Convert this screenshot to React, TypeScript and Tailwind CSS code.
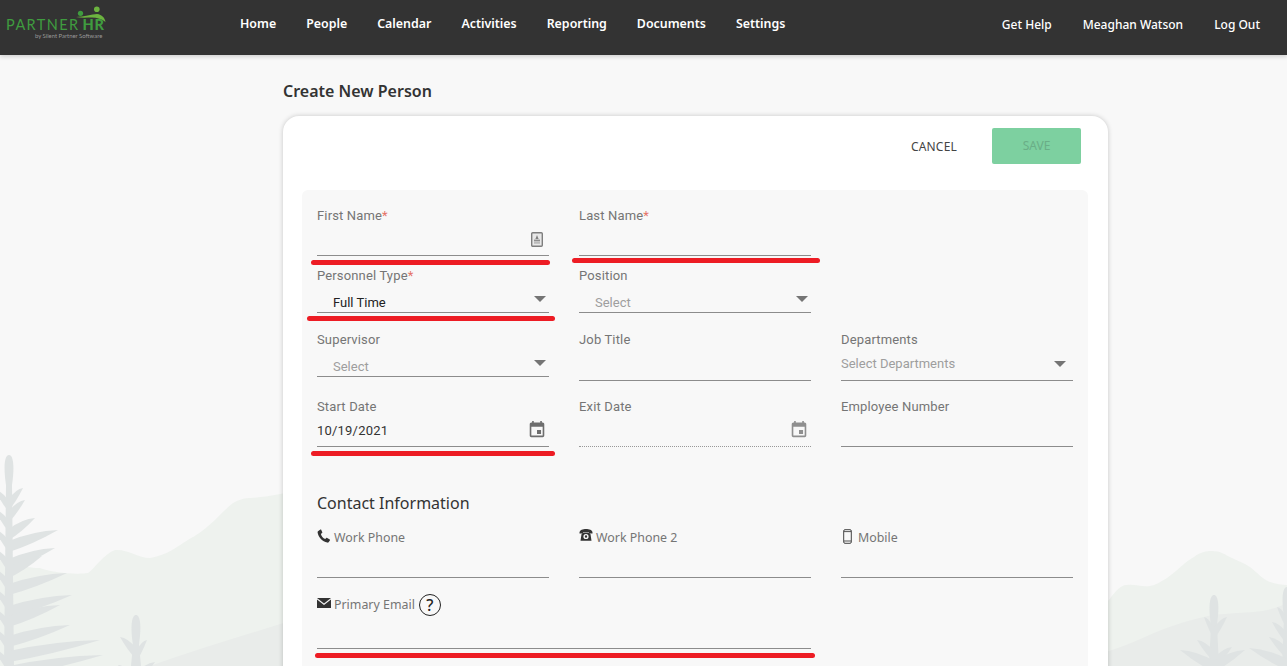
import type { ReactNode } from 'react';

const navLinks = ['Home', 'People', 'Calendar', 'Activities', 'Reporting', 'Documents', 'Settings'];
const userLinks = ['Get Help', 'Meaghan Watson', 'Log Out'];

function Tree({ trunk, top, bottom, tips, fill = '#dfe3e3' }: { trunk: number; top: number; bottom: number; tips: [number, number][]; fill?: string }) {
  return (
    <g fill={fill}>
      <path d={`M${trunk - 5} ${bottom} L${trunk - 3} ${top + 30} C${trunk - 6} ${top + 10} ${trunk - 4} ${top} ${trunk} ${top} C${trunk + 4} ${top} ${trunk + 6} ${top + 10} ${trunk + 3} ${top + 30} L${trunk + 5} ${bottom} Z`} />
      {tips.map(([tx, ty]) => {
        const by = ty + 18;
        const mx = (trunk + tx) / 2;
        return (
          <path
            key={`${tx}-${ty}`}
            d={`M${trunk} ${by - 7} Q${mx} ${ty + 1} ${tx} ${ty} Q${mx} ${ty + 14} ${trunk} ${by + 4} Z`}
          />
        );
      })}
    </g>
  );
}

function Scenery() {
  return (
    <svg className="absolute inset-0 w-full h-full" viewBox="0 0 1287 666">
      <path fill="#eef2ee" d="M0 560 C15 566 30 568 40 568 C50 572 75 575 88 573 C95 568 105 553 115 550 C128 549 138 558 150 558 C160 556 170 552 177 547 C190 538 198 535 207 527 C218 518 225 509 233 503 C240 499 246 498 250 498 C265 497 275 495 290 492 L290 666 L0 666 Z" />
      <path fill="#e9ecea" d="M150 666 C195 650 245 635 290 621 L290 666 Z" />
      <path fill="#eef2ee" d="M1100 607 L1109 600 C1115 592 1120 585 1127 585 C1135 584 1142 587 1150 586 C1156 585 1160 582 1167 578 C1178 570 1186 561 1194 557 C1200 552 1206 551 1212 551 C1220 551 1224 554 1230 557 C1238 561 1244 563 1250 567 C1258 573 1262 579 1270 582 C1276 584 1282 585 1287 585 L1287 666 L1100 666 Z" />
      <path fill="#e9ecea" d="M1100 654 L1109 651 C1125 646 1140 639 1154 633 C1170 626 1190 620 1204 617 C1215 614 1225 614 1237 613 C1250 612 1258 612 1267 610 C1275 608 1281 606 1287 603 L1287 666 L1100 666 Z" />
      <Tree
        trunk={9}
        top={455}
        bottom={666}
        tips={[[23, 488], [25, 500], [35, 518], [58, 530], [55, 548], [42, 556], [67, 573], [72, 595], [60, 605], [70, 625], [100, 640], [103, 655], [-5, 490], [-5, 510], [-5, 530], [-5, 550], [-5, 570], [-5, 590], [-5, 610], [-5, 630], [-5, 650]]}
      />
      <Tree trunk={136} top={615} bottom={666} tips={[[147, 640], [120, 637], [155, 662], [118, 665]]} />
      <Tree trunk={1214} top={595} bottom={666} tips={[[1227, 617], [1232, 647], [1245, 650], [1204, 617], [1197, 640], [1180, 650], [1235, 670], [1190, 670]]} />
      <Tree trunk={1287} top={587} bottom={666} tips={[[1277, 607], [1272, 622], [1269, 637], [1249, 648], [1262, 668]]} />
    </svg>
  );
}

function Logo() {
  return (
    <div className="relative w-[110px] h-[40px] shrink-0 font-['Lato',sans-serif]">
      <svg className="absolute left-0 top-0" width="110" height="26" viewBox="0 0 110 26">
        <circle cx="80.5" cy="13.3" r="2.6" fill="#3f9c3f" />
        <circle cx="96.8" cy="9.3" r="2.8" fill="#6cb33f" />
        <path fill="#6cb33f" d="M76 17 C84 16.5 92 14.5 97 14 C102 14.5 105 18 105.5 22 C102 19 97 17.5 92 17.5 C87 17.5 81 18 76 17 Z" />
      </svg>
      <div className="absolute left-[6px] top-[15px] flex items-baseline whitespace-nowrap text-[#3f9c3f] text-[14.5px] leading-[19px] tracking-[1.4px]">
        <span className="font-normal">PARTNER</span>
        <span className="ml-[3px] font-black tracking-[0.8px]">HR</span>
      </div>
      <div className="absolute left-[35px] top-[32px] whitespace-nowrap text-[#999] text-[5.9px] leading-[7px]">by Silent Partner Software</div>
    </div>
  );
}

function RedMark({ left, right, offset }: { left: number; right: number; offset: number }) {
  return (
    <div
      className="absolute h-[5px] rounded-full bg-[#ed1c24]"
      style={{ left, right, bottom: offset }}
    />
  );
}

type FieldProps = {
  label: ReactNode;
  required?: boolean;
  height: number;
  dotted?: boolean;
  colClass?: string;
  children?: ReactNode;
};

function Field({ label, required, height, dotted, colClass, children }: FieldProps) {
  return (
    <div className={`relative flex flex-col ${colClass ?? ''}`} style={{ height }}>
      <div className="flex items-center h-[20px] text-[13px] leading-[18px] text-[#757575] font-['Roboto',sans-serif] tracking-[0.15px]">
        {label}
        {required && <span className="text-[#e57368]">*</span>}
      </div>
      <div className={`flex-1 relative flex items-end border-b ${dotted ? 'border-dotted border-[#999]' : 'border-[#8c8c8c]'}`}>
        {children}
      </div>
    </div>
  );
}

function Caret({ className }: { className: string }) {
  return <div className={`absolute w-0 h-0 border-x-[6px] border-x-transparent border-t-[6px] border-t-[#757575] ${className}`} />;
}

function CalendarIcon({ color }: { color: string }) {
  return (
    <svg className="absolute right-[4px] top-[4px]" width="16" height="17" viewBox="3 1 18 21" fill={color}>
      <path d="M17 12h-5v5h5v-5zM16 1v2H8V1H6v2H5c-1.11 0-2 .9-2 2v14c0 1.1.89 2 2 2h14c1.1 0 2-.9 2-2V5c0-1.1-.9-2-2-2h-1V1h-2zm3 18H5V8h14v11z" />
    </svg>
  );
}

function ContactCardIcon() {
  return (
    <svg className="absolute right-[6px] top-[6px]" width="12" height="15" viewBox="0 0 12 15">
      <rect x="0.7" y="0.7" width="10.6" height="13.6" rx="1" fill="#e8e8e8" stroke="#7e7e7e" strokeWidth="1.4" />
      <path d="M6 3 L7.6 7 H4.4 Z" fill="#808080" />
      <rect x="3" y="7.6" width="6" height="1.8" fill="#8e8e8e" />
      <rect x="3" y="10.2" width="6" height="1.4" fill="#b0b0b0" />
    </svg>
  );
}

function PhoneIcon() {
  return (
    <svg className="mr-[3px] mt-[-5px]" width="14" height="14" viewBox="0 0 14 14" fill="#333">
      <path d="M1 2.2 L3.4 0.6 C3.8 0.4 4.1 0.5 4.3 0.9 L5.3 3.2 C5.4 3.6 5.3 3.9 5 4.1 L3.9 4.9 C4.3 7 6 9.2 8.2 10 L9.3 9 C9.6 8.7 9.9 8.7 10.2 8.9 L12.8 10.4 C13.1 10.6 13.2 11 13 11.3 L11.6 13.2 C11.3 13.6 10.8 13.7 10.3 13.6 C5.4 12.7 1.4 8.2 0.6 3.5 C0.5 3 0.7 2.5 1 2.2 Z" />
    </svg>
  );
}

function DeskPhoneIcon() {
  return (
    <svg className="mr-[3px] mt-[-6px]" width="14" height="12" viewBox="0 0 14 12" fill="#333">
      <path fillRule="evenodd" d="M0.5 3.6 C0.5 1 4 0 7 0 C10 0 13.5 1 13.5 3.6 V4.6 H10 V3 H4 V4.6 H0.5 Z" />
      <path fillRule="evenodd" d="M2.5 5.2 L4.3 3.6 H9.7 L11.5 5.2 L12.5 11.8 H1.5 Z M7 4.9 A2.6 2.6 0 1 0 7 10.1 A2.6 2.6 0 1 0 7 4.9 Z M7 6.3 A1.2 1.2 0 1 1 7 8.7 A1.2 1.2 0 1 1 7 6.3 Z" />
    </svg>
  );
}

function MobileIcon() {
  return (
    <svg className="ml-[2px] mr-[6px] mt-[-4px]" width="9" height="15" viewBox="0 0 9 15" fill="none" stroke="#444">
      <rect x="0.7" y="0.7" width="7.6" height="13.6" rx="1.3" strokeWidth="1" />
      <path d="M1 2.6 H8 M1 12 H8" strokeWidth="0.9" />
    </svg>
  );
}

function MailIcon() {
  return (
    <svg className="mr-[3px] mt-[-5px]" width="14" height="10" viewBox="0 0 14 10" fill="#333">
      <path d="M0 0 H14 L7 5.4 Z" />
      <path d="M0 1.6 L7 7 L14 1.6 V10 H0 Z" />
    </svg>
  );
}

export default function App() {
  return (
    <div className="relative w-full h-[666px] overflow-hidden bg-[#f8f8f8] font-['Noto_Sans',sans-serif]">
      <Scenery />

      <header className="relative h-[55px] bg-[#333333] flex items-start shadow-[0_2px_4px_rgba(0,0,0,0.15)]">
        <Logo />
        <nav className="flex gap-[30px] ml-[130px] pt-[15px] text-[12.4px] leading-[18px] font-semibold text-white">
          {navLinks.map((link) => (
            <span key={link}>{link}</span>
          ))}
        </nav>
        <div className="flex gap-[31px] ml-auto pr-[27px] pt-[16px] text-[12px] leading-[18px] font-medium text-white">
          {userLinks.map((link) => (
            <span key={link}>{link}</span>
          ))}
        </div>
      </header>

      <main className="relative w-[825px] ml-[283px]">
        <h1 className="mt-[25px] h-[22px] text-[16px] leading-[22px] font-semibold text-[#333]">Create New Person</h1>

        <section className="mt-[14px] bg-white rounded-t-[16px] shadow-[0_0_5px_rgba(0,0,0,0.2)] pl-[19px] pr-[20px] pt-[12px] pb-[40px]">
          <div className="flex justify-end items-center h-[36px] gap-[35px] pr-[7px]">
            <button className="mt-[1px] text-[12px] text-[#444] tracking-[0.2px]">CANCEL</button>
            <button className="w-[89px] h-[36px] rounded-[2px] bg-[#7dd0a0] text-[12px] text-[#6aae87]">SAVE</button>
          </div>

          <div className="mt-[26px] bg-[#f8f8f8] rounded-[6px] px-[15px] pt-[16px] pb-[30px]">
            <div className="grid grid-cols-[232px_232px_232px] gap-x-[30px] items-start">
              <Field label="First Name" required height={50}>
                <ContactCardIcon />
                <RedMark left={-6} right={-1} offset={-10} />
              </Field>
              <Field label="Last Name" required height={50}>
                <RedMark left={-7} right={-9} offset={-8} />
              </Field>
              <div />
            </div>

            <div className="grid grid-cols-[232px_232px_232px] gap-x-[30px] items-start mt-[10px]">
              <Field label="Personnel Type" required height={47}>
                <span className="pl-[16px] text-[13px] leading-[18px] text-[#222] font-['Roboto',sans-serif]">Full Time</span>
                <Caret className="right-[3px] top-[10px]" />
                <RedMark left={-10} right={-6} offset={-9} />
              </Field>
              <Field label="Position" height={47}>
                <span className="pl-[16px] text-[13px] leading-[18px] text-[#9e9e9e] font-['Roboto',sans-serif]">Select</span>
                <Caret className="right-[3px] top-[10px]" />
              </Field>
              <div />
            </div>

            <div className="grid grid-cols-[232px_232px_232px] gap-x-[30px] items-start mt-[17px]">
              <Field label="Supervisor" height={47}>
                <span className="pl-[16px] text-[13px] leading-[18px] text-[#9e9e9e] font-['Roboto',sans-serif]">Select</span>
                <Caret className="right-[3px] top-[10px]" />
              </Field>
              <Field label="Job Title" height={51} />
              <Field label="Departments" height={51}>
                <span className="pb-[7px] text-[13px] leading-[18px] text-[#9e9e9e] font-['Roboto',sans-serif]">Select Departments</span>
                <Caret className="right-[7px] top-[11px]" />
              </Field>
            </div>

            <div className="grid grid-cols-[232px_232px_232px] gap-x-[30px] items-start mt-[16px]">
              <Field label="Start Date" height={50}>
                <span className="pb-[6px] text-[13px] leading-[18px] text-[#333] font-['Roboto',sans-serif] tracking-[0.2px]">10/19/2021</span>
                <CalendarIcon color="#6e6e6e" />
                <RedMark left={-6} right={-6} offset={-10} />
              </Field>
              <Field label="Exit Date" height={50} dotted>
                <CalendarIcon color="#8f8f8f" />
              </Field>
              <Field label="Employee Number" height={50} />
            </div>

            <h2 className="mt-[44px] h-[24px] text-[16px] leading-[24px] text-[#333]">Contact Information</h2>

            <div className="grid grid-cols-[232px_232px_232px] gap-x-[30px] items-start mt-[13px]">
              <Field height={50} label={<span className="flex items-center font-['Noto_Sans',sans-serif] text-[12.4px] tracking-normal"><PhoneIcon />Work Phone</span>} />
              <Field height={50} label={<span className="flex items-center font-['Noto_Sans',sans-serif] text-[12.4px] tracking-normal"><DeskPhoneIcon />Work Phone 2</span>} />
              <Field height={50} label={<span className="flex items-center font-['Noto_Sans',sans-serif] text-[12.4px] tracking-normal"><MobileIcon />Mobile</span>} />
            </div>

            <div className="grid grid-cols-[232px_232px_232px] gap-x-[30px] items-start mt-[17px]">
              <Field
                height={54}
                colClass="col-span-2"
                label={
                  <span className="flex items-center font-['Noto_Sans',sans-serif] text-[12.4px] tracking-normal">
                    <MailIcon />
                    Primary Email
                    <span className="ml-[4px] w-[22px] h-[22px] rounded-full border border-[#222] bg-[#f8f8f8] flex items-center justify-center text-[16px] font-medium text-[#222]">?</span>
                  </span>
                }
              >
                <RedMark left={-2} right={-4} offset={-10} />
              </Field>
            </div>
          </div>
        </section>
      </main>
    </div>
  );
}
